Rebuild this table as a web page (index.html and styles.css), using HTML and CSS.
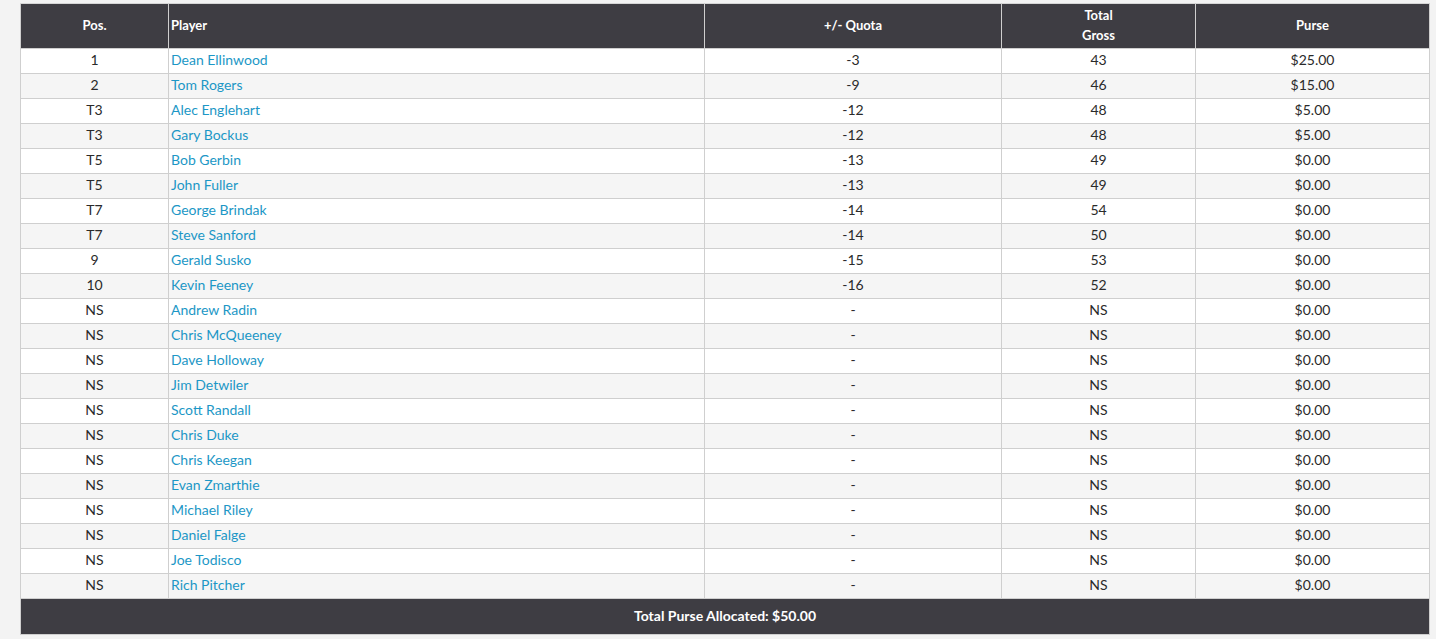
FILE: index.html
```html
<!DOCTYPE html>
<html>
<head>
<meta charset="utf-8">
<link rel="stylesheet" href="styles.css">
</head>
<body>
<div class="page">
<table class="board">
<colgroup>
<col class="c-pos"><col class="c-player"><col class="c-quota"><col class="c-gross"><col class="c-purse">
</colgroup>
<thead>
<tr><th>Pos.</th><th class="left">Player</th><th>+/- Quota</th><th>Total<br>Gross</th><th>Purse</th></tr>
</thead>
<tbody>
<tr><td>1</td><td class="left"><a href="#">Dean Ellinwood</a></td><td>-3</td><td>43</td><td>$25.00</td></tr>
<tr><td>2</td><td class="left"><a href="#">Tom Rogers</a></td><td>-9</td><td>46</td><td>$15.00</td></tr>
<tr><td>T3</td><td class="left"><a href="#">Alec Englehart</a></td><td>-12</td><td>48</td><td>$5.00</td></tr>
<tr><td>T3</td><td class="left"><a href="#">Gary Bockus</a></td><td>-12</td><td>48</td><td>$5.00</td></tr>
<tr><td>T5</td><td class="left"><a href="#">Bob Gerbin</a></td><td>-13</td><td>49</td><td>$0.00</td></tr>
<tr><td>T5</td><td class="left"><a href="#">John Fuller</a></td><td>-13</td><td>49</td><td>$0.00</td></tr>
<tr><td>T7</td><td class="left"><a href="#">George Brindak</a></td><td>-14</td><td>54</td><td>$0.00</td></tr>
<tr><td>T7</td><td class="left"><a href="#">Steve Sanford</a></td><td>-14</td><td>50</td><td>$0.00</td></tr>
<tr><td>9</td><td class="left"><a href="#">Gerald Susko</a></td><td>-15</td><td>53</td><td>$0.00</td></tr>
<tr><td>10</td><td class="left"><a href="#">Kevin Feeney</a></td><td>-16</td><td>52</td><td>$0.00</td></tr>
<tr><td>NS</td><td class="left"><a href="#">Andrew Radin</a></td><td>-</td><td>NS</td><td>$0.00</td></tr>
<tr><td>NS</td><td class="left"><a href="#">Chris McQueeney</a></td><td>-</td><td>NS</td><td>$0.00</td></tr>
<tr><td>NS</td><td class="left"><a href="#">Dave Holloway</a></td><td>-</td><td>NS</td><td>$0.00</td></tr>
<tr><td>NS</td><td class="left"><a href="#">Jim Detwiler</a></td><td>-</td><td>NS</td><td>$0.00</td></tr>
<tr><td>NS</td><td class="left"><a href="#">Scott Randall</a></td><td>-</td><td>NS</td><td>$0.00</td></tr>
<tr><td>NS</td><td class="left"><a href="#">Chris Duke</a></td><td>-</td><td>NS</td><td>$0.00</td></tr>
<tr><td>NS</td><td class="left"><a href="#">Chris Keegan</a></td><td>-</td><td>NS</td><td>$0.00</td></tr>
<tr><td>NS</td><td class="left"><a href="#">Evan Zmarthie</a></td><td>-</td><td>NS</td><td>$0.00</td></tr>
<tr><td>NS</td><td class="left"><a href="#">Michael Riley</a></td><td>-</td><td>NS</td><td>$0.00</td></tr>
<tr><td>NS</td><td class="left"><a href="#">Daniel Falge</a></td><td>-</td><td>NS</td><td>$0.00</td></tr>
<tr><td>NS</td><td class="left"><a href="#">Joe Todisco</a></td><td>-</td><td>NS</td><td>$0.00</td></tr>
<tr><td>NS</td><td class="left"><a href="#">Rich Pitcher</a></td><td>-</td><td>NS</td><td>$0.00</td></tr>
</tbody>
<tfoot>
<tr><td colspan="5">Total Purse Allocated: $50.00</td></tr>
</tfoot>
</table>
</div>
</body>
</html>
```
FILE: styles.css
```css
html, body {
  margin: 0;
  padding: 0;
  background: #f3f3f3;
}
body {
  font-family: Lato, "Liberation Sans", Arial, sans-serif;
  color: #2a2a2a;
}
.page {
  padding: 3px 0 0 20px;
}
.board {
  width: 1410px;
  border-collapse: collapse;
  table-layout: fixed;
  font-size: 14px;
}
.c-pos { width: 148px; }
.c-player { width: 536px; }
.c-quota { width: 297px; }
.c-gross { width: 194px; }
.c-purse { width: 234px; }

.board th {
  background: #3e3d43;
  color: #fff;
  font-size: 13px;
  font-weight: 700;
  height: 42px;
  line-height: 20px;
  padding: 0 2px 2px;
  text-align: center;
  border: 1px solid #cfcfcf;
  border-top-color: #d6d6d6;
}
.board td {
  height: 22px;
  padding: 0 2px 2px;
  text-align: center;
  border: 1px solid #cfcfcf;
  line-height: 22px;
  white-space: nowrap;
}
.board tbody tr:nth-child(odd) td { background: #fff; }
.board tbody tr:nth-child(even) td { background: #f5f5f5; }
.board .left { text-align: left; }
.board a {
  color: #1c97c6;
  text-decoration: none;
}
.board tfoot td {
  background: #3e3d43;
  color: #fff;
  font-weight: 700;
  height: 33px;
  line-height: 33px;
  padding-bottom: 2px;
  border-top: 1px solid #cfcfcf;
}
```
